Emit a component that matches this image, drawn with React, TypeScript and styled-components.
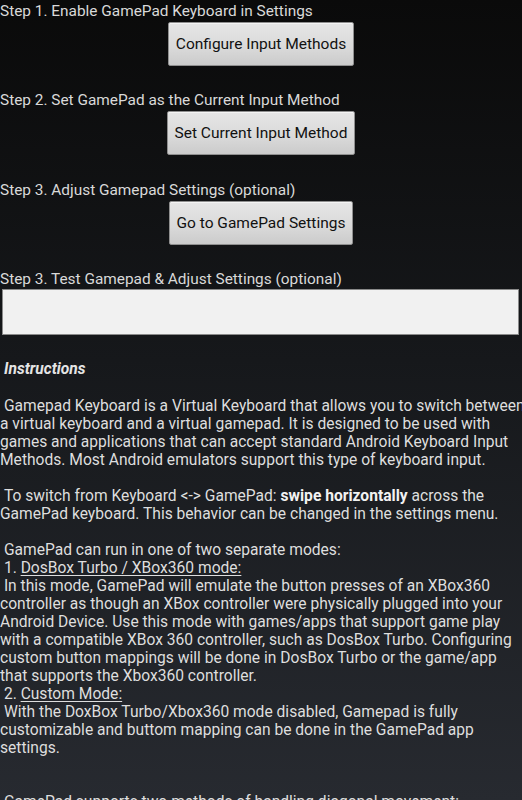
import React from "react";
import styled, { createGlobalStyle } from "styled-components";

const GlobalStyle = createGlobalStyle`
  html, body {
    margin: 0;
    padding: 0;
    background: #0b0b0b;
  }
`;

const Screen = styled.div`
  height: 100vh;
  overflow: hidden;
  background: linear-gradient(180deg, #0a0a0a 0%, #16181b 45%, #272a30 100%);
  font-family: Roboto, "Liberation Sans", sans-serif;
  color: #dedede;
  font-size: 15px;
  line-height: 18px;
`;

const Step = styled.section<{ $last?: boolean }>`
  display: flex;
  flex-direction: column;
  padding-top: 2px;
  margin-bottom: ${(p) => (p.$last ? "0" : "23.3px")};
`;

const StepLabel = styled.div`
  font-size: 15.4px;
  line-height: 19px;
  color: #d9d9d9;
  white-space: nowrap;
`;

const ActionButton = styled.button`
  align-self: center;
  margin-top: 1px;
  height: 44px;
  padding: 0 7px;
  font-family: Roboto, "Liberation Sans", sans-serif;
  font-size: 15.5px;
  color: #111;
  background: linear-gradient(180deg, #e6e6e6 0%, #d9d9d9 60%, #cbcbcb 100%);
  border: 1px solid #8f8f8f;
  border-radius: 2px;
  box-shadow: inset 0 1px 0 #f4f4f4;
`;

const TestInput = styled.div`
  margin: 0 3px 0 2px;
  height: 44px;
  background: #f1f1f1;
  border: 1px solid #8a8a8a;
`;

const Instructions = styled.div`
  margin-top: 25px;
  white-space: nowrap;
  font-size: 15.6px;
`;

const Heading = styled.div`
  font-size: 15.6px;
  font-weight: 700;
  font-style: italic;
  color: #e4e4e4;
  padding-left: 4px;
`;

const Line = styled.div<{ $tall?: boolean }>`
  height: ${(p) => (p.$tall ? "19px" : "18px")};
`;

const Strong = styled.b`
  font-weight: 700;
  color: #f2f2f2;
`;

const Under = styled.span`
  text-decoration: underline;
  text-underline-offset: 2px;
`;

const sp = "\u00a0";

export default function App() {
  return (
    <>
      <GlobalStyle />
      <Screen>
        <Step>
          <StepLabel>Step 1. Enable GamePad Keyboard in Settings</StepLabel>
          <ActionButton>Configure Input Methods</ActionButton>
        </Step>
        <Step>
          <StepLabel>Step 2. Set GamePad as the Current Input Method</StepLabel>
          <ActionButton>Set Current Input Method</ActionButton>
        </Step>
        <Step>
          <StepLabel>Step 3. Adjust Gamepad Settings (optional)</StepLabel>
          <ActionButton>Go to GamePad Settings</ActionButton>
        </Step>
        <Step $last>
          <StepLabel>Step 3. Test Gamepad &amp; Adjust Settings (optional)</StepLabel>
          <TestInput />
        </Step>
        <Instructions>
          <Heading>Instructions</Heading>
          <Line $tall />
          <Line>{sp}Gamepad Keyboard is a Virtual Keyboard that allows you to switch between</Line>
          <Line>a virtual keyboard and a virtual gamepad. It is designed to be used with</Line>
          <Line>games and applications that can accept standard Android Keyboard Input</Line>
          <Line>Methods. Most Android emulators support this type of keyboard input.</Line>
          <Line />
          <Line>
            {sp}To switch from Keyboard &lt;-&gt; GamePad: <Strong>swipe horizontally</Strong> across the
          </Line>
          <Line>GamePad keyboard. This behavior can be changed in the settings menu.</Line>
          <Line />
          <Line>{sp}GamePad can run in one of two separate modes:</Line>
          <Line>
            {sp}1. <Under>DosBox Turbo / XBox360 mode:</Under>
          </Line>
          <Line>{sp}In this mode, GamePad will emulate the button presses of an XBox360</Line>
          <Line>controller as though an XBox controller were physically plugged into your</Line>
          <Line>Android Device. Use this mode with games/apps that support game play</Line>
          <Line>with a compatible XBox 360 controller, such as DosBox Turbo. Configuring</Line>
          <Line>custom button mappings will be done in DosBox Turbo or the game/app</Line>
          <Line>that supports the Xbox360 controller.</Line>
          <Line>
            {sp}2. <Under>Custom Mode:</Under>
          </Line>
          <Line>{sp}With the DoxBox Turbo/Xbox360 mode disabled, Gamepad is fully</Line>
          <Line>customizable and buttom mapping can be done in the GamePad app</Line>
          <Line>settings.</Line>
          <Line />
          <Line />
          <Line>{sp}GamePad supports two methods of handling diagonal movement:</Line>
        </Instructions>
      </Screen>
    </>
  );
}
